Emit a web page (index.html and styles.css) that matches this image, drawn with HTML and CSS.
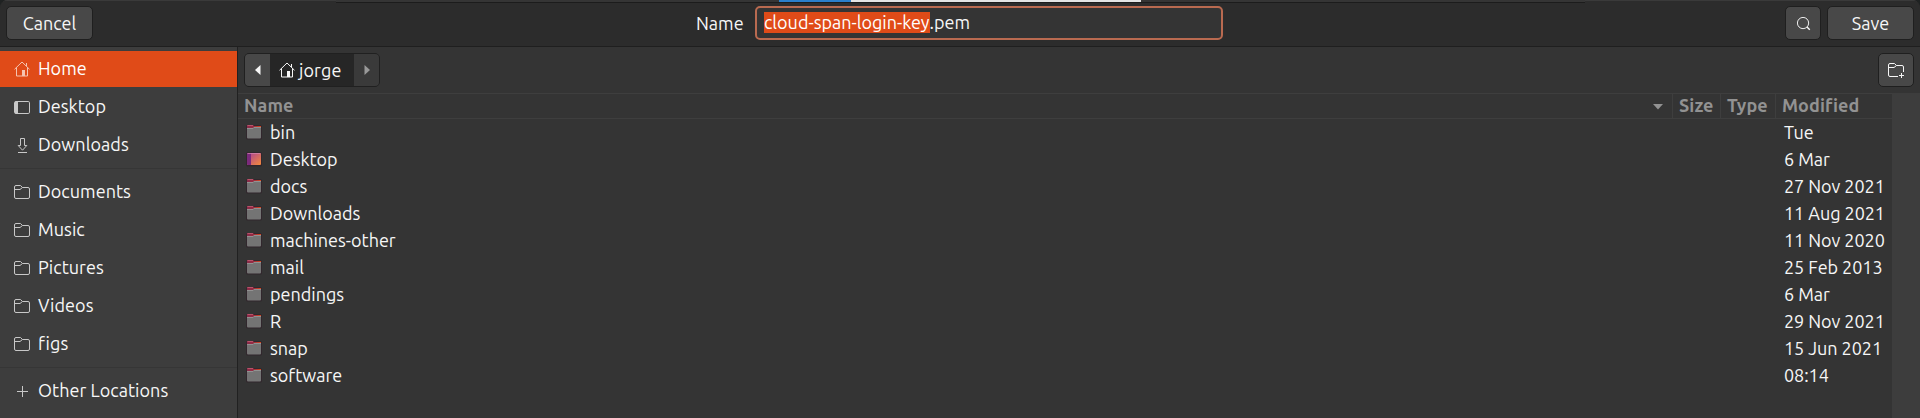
FILE: index.html
```html
<!DOCTYPE html>
<html lang="en">
<head>
<meta charset="utf-8">
<title>Save file</title>
<link rel="stylesheet" href="styles.css">
</head>
<body>
<svg class="defs" width="0" height="0" aria-hidden="true">
  <defs>
    <linearGradient id="red" x1="0" x2="1"><stop offset="0" stop-color="#862c4a"/><stop offset=".45" stop-color="#9a2a42"/><stop offset="1" stop-color="#d84a1c"/></linearGradient>
    <linearGradient id="desk" x1="0" y1="0" x2="1" y2="1"><stop offset="0" stop-color="#a8409a"/><stop offset="1" stop-color="#f58a3a"/></linearGradient>
    <symbol id="home" viewBox="0 0 16 16"><path d="M.5 8.300 8 1l7.500 7.300M2.500 6.500V15h11V6.500M12.500 2v3" fill="none" stroke="currentColor"/><path d="M8 9h3v6H8z" fill="currentColor"/></symbol>
    <symbol id="desktop" viewBox="0 0 16 16"><rect x=".5" y="2.500" width="15" height="12" rx="1.300" fill="none" stroke="currentColor"/><path d="M1 2.500h3v12H1z" fill="currentColor"/></symbol>
    <symbol id="download" viewBox="0 0 16 16"><path d="M6.500 1.500h4v7h2.300l-4.300 4.700-4.300-4.700h2.300zM4 15.500h9" fill="none" stroke="currentColor"/></symbol>
    <symbol id="folder" viewBox="0 0 16 16"><path d="M.5 13V3A1.500 1.500 0 0 1 2 1.500h4.500l2 2H14A1.500 1.500 0 0 1 15.500 5v8a1.500 1.500 0 0 1-1.500 1.500H2A1.500 1.500 0 0 1 .5 13zM.5 5.500H6l2.500-2" fill="none" stroke="currentColor"/></symbol>
    <symbol id="plus" viewBox="0 0 16 16"><path d="M3 8.500h11M8.500 3v11" stroke="currentColor"/></symbol>
    <symbol id="newfolder" viewBox="0 0 16 16"><path d="M10 14.500H2A1.500 1.500 0 0 1 .5 13V3A1.500 1.500 0 0 1 2 1.500h4.500l2 2H14A1.500 1.500 0 0 1 15.500 5v5M.5 5.500H6l2.500-2M11 13.500h5M13.500 11v5" fill="none" stroke="currentColor"/></symbol>
    <symbol id="search" viewBox="0 0 16 16"><circle cx="7.500" cy="7.500" r="6" fill="none" stroke="currentColor"/><path d="m11.700 11.700 3 3" stroke="currentColor" stroke-width="1.500"/></symbol>
    <symbol id="dir" viewBox="0 0 16 16"><rect x="0" y="1" width="16" height="14.500" rx="1.500" fill="#30202a" opacity=".65"/><path d="M1 1h6l1 1h7v4H1z" fill="url(#red)"/><path d="M1.500 1.500h5.500" stroke="#b8546a"/><path d="M1 4h6l1-1h7v10.500a1 1 0 0 1-1 1H2a1 1 0 0 1-1-1z" fill="#747474"/><path d="M1 4.500h6l1-1h7" fill="none" stroke="#929292"/></symbol>
    <symbol id="deskdir" viewBox="0 0 16 16"><rect x="0" y="1" width="16" height="14.500" rx="1.500" fill="#30202a" opacity=".65"/><rect x="1" y="2" width="14" height="12" rx="1" fill="url(#desk)"/><path d="M1 2h4v12H2a1 1 0 0 1-1-1z" fill="#7b2a7c"/><path d="M1.500 2.500h13" stroke="#d58ab0" opacity=".7"/></symbol>
  </defs>
</svg>
<div class="dialog">
  <div class="behind"><span class="tab-blue"></span><span class="tab-white"></span></div>
  <header class="header">
    <button class="btn wide">Cancel</button>
    <label class="name"><span class="w-name">Name</span><span class="entry"><mark>cloud-span-login-key</mark><span>.pem</span></span></label>
    <div class="actions"><button class="btn square"><svg class="ico search"><use href="#search"/></svg></button><button class="btn wide">Save</button></div>
  </header>
  <div class="body">
    <nav class="sidebar">
      <a class="place active"><svg class="ico"><use href="#home"/></svg><span>Home</span></a>
      <a class="place"><svg class="ico"><use href="#desktop"/></svg><span>Desktop</span></a>
      <a class="place"><svg class="ico"><use href="#download"/></svg><span>Downloads</span></a>
      <hr>
      <a class="place"><svg class="ico"><use href="#folder"/></svg><span>Documents</span></a>
      <a class="place"><svg class="ico"><use href="#folder"/></svg><span>Music</span></a>
      <a class="place"><svg class="ico"><use href="#folder"/></svg><span>Pictures</span></a>
      <a class="place"><svg class="ico"><use href="#folder"/></svg><span>Videos</span></a>
      <a class="place"><svg class="ico"><use href="#folder"/></svg><span>figs</span></a>
      <hr>
      <a class="place"><svg class="ico"><use href="#plus"/></svg><span>Other Locations</span></a>
    </nav>
    <main class="main">
      <div class="toolbar">
        <div class="path">
          <button class="step"><svg width="6" height="10"><path d="M5.500 0v10L0 5z" fill="currentColor"/></svg></button>
          <button class="crumb"><svg class="ico"><use href="#home"/></svg><span>jorge</span></button>
          <button class="step off"><svg width="6" height="10"><path d="M.5 0v10L6 5z" fill="currentColor"/></svg></button>
        </div>
        <button class="btn square"><svg class="ico"><use href="#newfolder"/></svg></button>
      </div>
      <div class="files">
        <div class="table">
          <div class="row head"><div class="c-name">Name<svg width="10" height="6"><path d="M0 0h10L5 5.500z" fill="currentColor"/></svg></div><div>Size</div><div>Type</div><div>Modified</div></div>
          <div class="row"><svg class="ico"><use href="#dir"/></svg><span>bin</span><time>Tue</time></div>
          <div class="row"><svg class="ico"><use href="#deskdir"/></svg><span>Desktop</span><time>6 Mar</time></div>
          <div class="row"><svg class="ico"><use href="#dir"/></svg><span>docs</span><time>27 Nov 2021</time></div>
          <div class="row"><svg class="ico"><use href="#dir"/></svg><span>Downloads</span><time>11 Aug 2021</time></div>
          <div class="row"><svg class="ico"><use href="#dir"/></svg><span>machines-other</span><time>11 Nov 2020</time></div>
          <div class="row"><svg class="ico"><use href="#dir"/></svg><span>mail</span><time>25 Feb 2013</time></div>
          <div class="row"><svg class="ico"><use href="#dir"/></svg><span>pendings</span><time>6 Mar</time></div>
          <div class="row"><svg class="ico"><use href="#dir"/></svg><span>R</span><time>29 Nov 2021</time></div>
          <div class="row"><svg class="ico"><use href="#dir"/></svg><span>snap</span><time>15 Jun 2021</time></div>
          <div class="row"><svg class="ico"><use href="#dir"/></svg><span>software</span><time>08:14</time></div>
        </div>
        <div class="scrollbar"></div>
      </div>
    </main>
  </div>
</div>
</body>
</html>
```
FILE: styles.css
```css
* { box-sizing: border-box; }
body { margin: 0; background: #1f2222; color: #f7f7f7; font: 18px/24px "Ubuntu", "Noto Sans", sans-serif; overflow: hidden; }
.defs { display: block; height: 0; }
button { font: inherit; color: inherit; padding: 0; margin: 0; }
.ico { width: 16px; height: 16px; flex: none; display: block; }
.dialog { width: 1920px; height: 418px; display: flex; flex-direction: column; background: #2c2c2c; border-radius: 8px 8px 0 0; overflow: hidden; }
.behind { height: 3px; flex: none; display: flex; background: linear-gradient(#3a3a3a 1px, #2c2c2c 1px) no-repeat 0 0 / 336px 3px, linear-gradient(#3a3a3a 1px, #2c2c2c 1px) no-repeat 1585px 0 / 335px 3px, linear-gradient(#353535 2px, #1c1c1c 2px); padding-left: 779px; }
.tab-blue { width: 72px; height: 2px; background: #2a7fcb; }
.tab-white { width: 290px; height: 2px; background: #e4e4e4; }
.header { height: 44px; flex: none; display: grid; grid-template-columns: 690px 1fr auto; align-items: start; padding: 3px 6px 0 6px; background: #2c2c2c; border-bottom: 1px solid #1f1f1f; }
.btn { height: 34px; border: 1px solid #1f1f1f; border-radius: 5px; background: #484848; display: flex; align-items: center; justify-content: center; }
.wide { width: 87px; }
.square { width: 36px; }
.search { width: 15px; height: 15px; }
.actions { display: flex; gap: 6px; }
.name { display: flex; height: 34px; align-items: center; }
.w-name { width: 59px; padding-bottom: 1px; }
.entry { width: 468px; height: 34px; border: 2px solid #b96a50; border-radius: 5px; background: #343434; padding: 4px 7px; display: flex; line-height: 21px; }
mark { background: #e04b18; color: #fff; height: 21px; white-space: nowrap; }
.body { flex: 1; display: flex; min-height: 0; }
.sidebar { width: 238px; background: #3d3d3d; border-right: 1px solid #212121; padding-top: 4px; }
.place { height: 36px; margin-bottom: 2px; display: flex; align-items: center; gap: 8px; padding-left: 14px; }
.place span { padding-bottom: 2px; letter-spacing: .05px; }
.place .ico { color: #c8c8c8; }
.place.active { background: #e04b18; color: #fff; }
.place.active .ico { color: #f5c3b0; }
.sidebar hr { height: 1px; border: 0; margin: 5px 0; background: #363636; }
.main { flex: 1; display: flex; flex-direction: column; background: #343434; }
.toolbar { height: 46px; padding: 6px 6px 0; display: flex; justify-content: space-between; }
.path { display: flex; height: 34px; border: 1px solid #202020; border-radius: 5px; overflow: hidden; width: 136px; background: #262626; }
.step { width: 25px; border: 0; background: #484848; display: grid; place-items: center; }
.step.off { background: #3a3a3a; color: #999; }
.crumb { flex: 1; border: 0; background: #262626; display: flex; align-items: center; gap: 4px; padding-left: 9px; }
.crumb span { padding-bottom: 1px; letter-spacing: .1px; }
.files { flex: 1; display: flex; }
.table { flex: 1; }
.scrollbar { width: 28px; background: #3d3d3d; }
.row { height: 27px; display: grid; grid-template-columns: 16px 1fr 108px; align-items: center; column-gap: 8px; padding-left: 8px; }
.row .ico { margin-top: -1px; }
.row span, .row time { padding-bottom: 2px; }
.row time { white-space: nowrap; letter-spacing: -.05px; }
.head { height: 26px; grid-template-columns: 1fr 48px 55px 117px; column-gap: 0; padding: 0; align-items: stretch; border-top: 1px solid #3e3e3e; border-bottom: 1px solid #3e3e3e; font-weight: 700; line-height: 22px; letter-spacing: .1px; color: #929292; }
.head > div { padding-left: 6px; border-left: 1px solid #3e3e3e; }
.head .c-name { border-left: 0; padding-right: 9px; display: flex; justify-content: space-between; align-items: flex-start; }
.head svg { margin-top: 10px; }
```
